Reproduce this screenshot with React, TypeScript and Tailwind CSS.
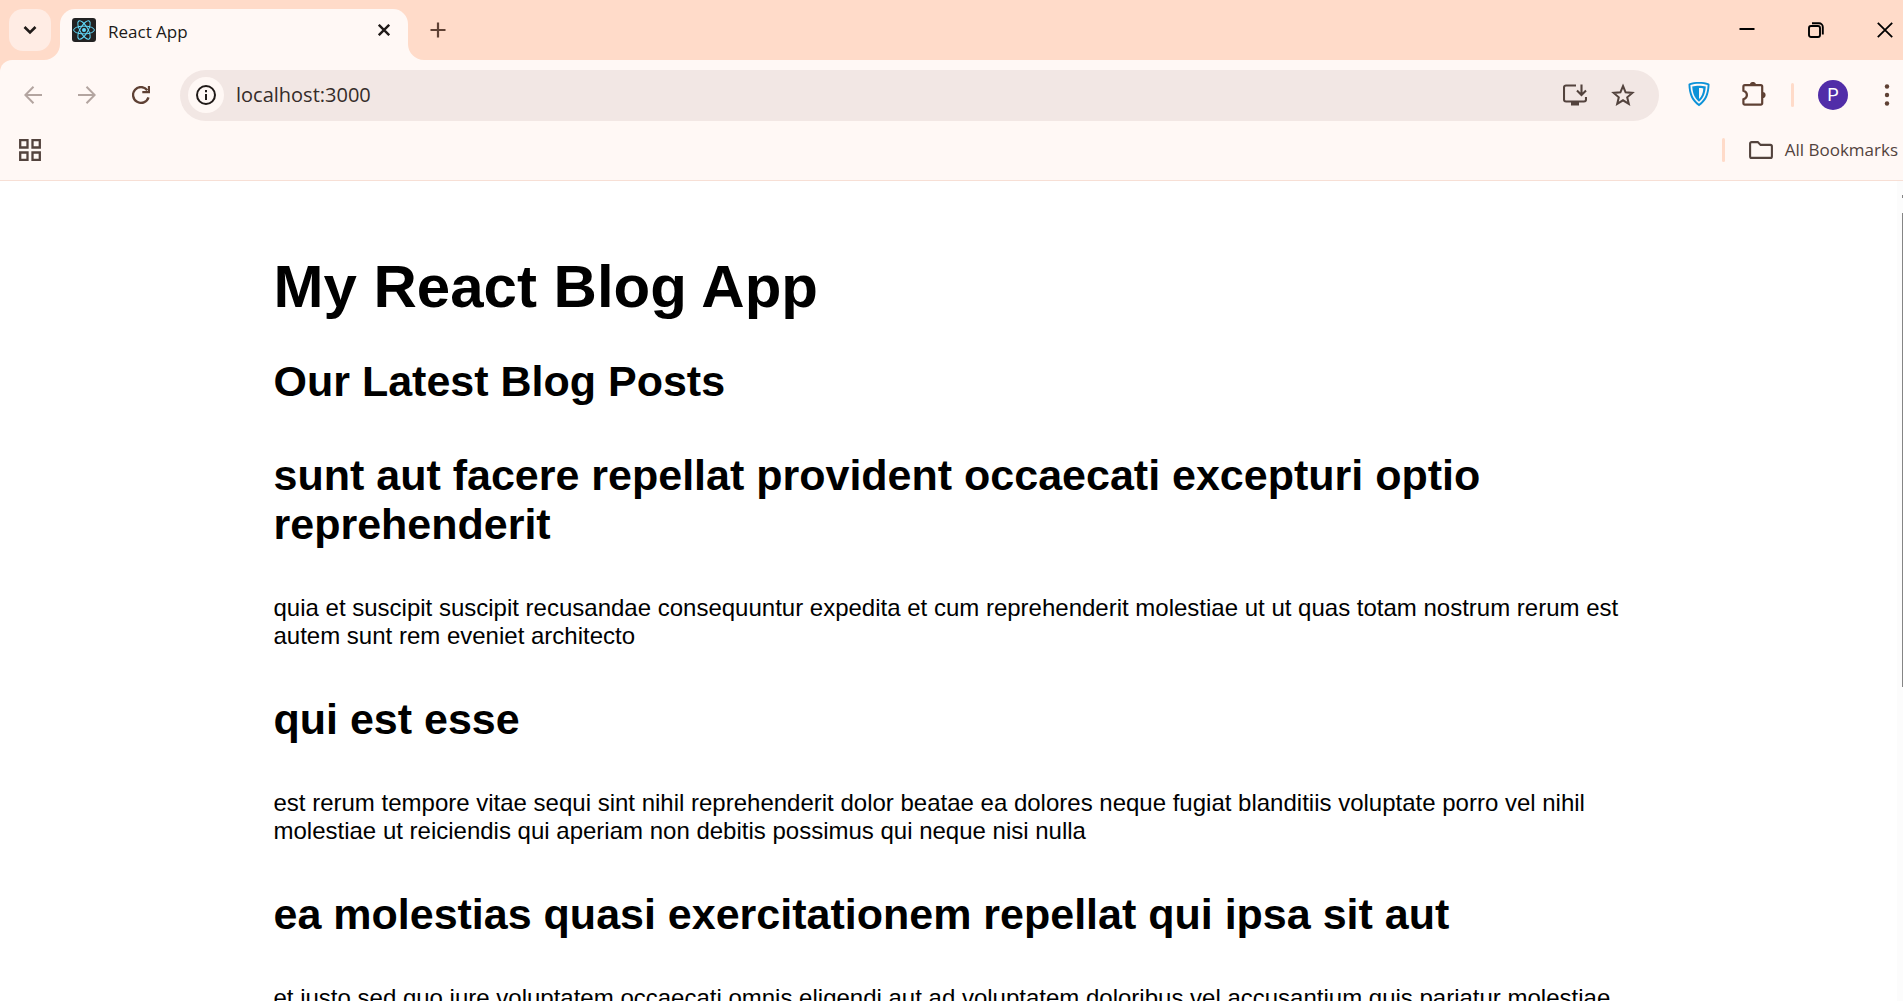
import React from "react";

const posts = [
  {
    title: "sunt aut facere repellat provident occaecati excepturi optio reprehenderit",
    body: "quia et suscipit suscipit recusandae consequuntur expedita et cum reprehenderit molestiae ut ut quas totam nostrum rerum est autem sunt rem eveniet architecto",
  },
  {
    title: "qui est esse",
    body: "est rerum tempore vitae sequi sint nihil reprehenderit dolor beatae ea dolores neque fugiat blanditiis voluptate porro vel nihil molestiae ut reiciendis qui aperiam non debitis possimus qui neque nisi nulla",
  },
  {
    title: "ea molestias quasi exercitationem repellat qui ipsa sit aut",
    body: "et iusto sed quo iure voluptatem occaecati omnis eligendi aut ad voluptatem doloribus vel accusantium quis pariatur molestiae porro eius odio et labore et velit aut",
  },
];

function ReactLogo() {
  return (
    <svg width="24" height="24" viewBox="0 0 24 24" fill="none" stroke="#61dafb" strokeWidth="1" aria-hidden="true">
      <rect width="24" height="24" rx="3" fill="#222222" stroke="none" />
      <ellipse cx="12" cy="12" rx="10.4" ry="3.9" />
      <ellipse cx="12" cy="12" rx="10.4" ry="3.9" transform="rotate(60 12 12)" />
      <ellipse cx="12" cy="12" rx="10.4" ry="3.9" transform="rotate(120 12 12)" />
      <circle cx="12" cy="12" r="2" fill="#61dafb" stroke="none" />
    </svg>
  );
}

function TabStrip() {
  return (
    <div className="flex h-[60px] items-center bg-[#ffdbc9] pl-[9px]">
      <button aria-label="Search tabs" className="grid size-[42px] shrink-0 place-items-center rounded-[14px] bg-[#ffece4]">
        <svg width="14" height="10" viewBox="0 0 14 10" fill="none" stroke="#201a18" strokeWidth="2.6">
          <path d="M1.5 2 7 7.5 12.5 2" />
        </svg>
      </button>
      <div className="relative ml-[9px] flex h-[51px] w-[348px] shrink-0 items-start self-end rounded-t-[15px] bg-[#fff8f5] pt-[9px] pl-3">
        <svg className="absolute bottom-0 -left-4" width="16" height="16" viewBox="0 0 16 16" fill="#fff8f5" aria-hidden="true">
          <path d="M16 0v16H0A16 16 0 0 0 16 0Z" />
        </svg>
        <svg className="absolute -right-4 bottom-0" width="16" height="16" viewBox="0 0 16 16" fill="#fff8f5" aria-hidden="true">
          <path d="M0 0v16h16A16 16 0 0 1 0 0Z" />
        </svg>
        <ReactLogo />
        <span className="ml-3 pt-0.5 text-[17px] leading-6 text-[#201a18]">React App</span>
        <button aria-label="Close tab" className="mr-3 ml-auto grid size-6 place-items-center">
          <svg width="12" height="12" viewBox="0 0 12 12" fill="none" stroke="#201a18" strokeWidth="2.4">
            <path d="m0.8 0.8 10.4 10.4M11.2 0.8 0.8 11.2" />
          </svg>
        </button>
      </div>
      <button aria-label="New tab" className="ml-[18px] grid size-6 place-items-center">
        <svg width="16" height="16" viewBox="0 0 16 16" fill="none" stroke="#5f4134" strokeWidth="2.2">
          <path d="M8 0.5v15M0.5 8h15" />
        </svg>
      </button>
      <div className="mr-[10px] ml-auto flex items-center gap-[53px] text-black">
        <button aria-label="Minimize">
          <svg width="16" height="16" viewBox="0 0 16 16" stroke="currentColor" strokeWidth="2">
            <path d="M0.5 7h15" />
          </svg>
        </button>
        <button aria-label="Restore">
          <svg width="16" height="16" viewBox="0 0 16 16" fill="none" stroke="currentColor" strokeWidth="1.9">
            <rect x="1" y="4" width="11" height="11" rx="2" />
            <path d="M4 1.2h7A3.8 3.8 0 0 1 14.8 5v7.5" />
          </svg>
        </button>
        <button aria-label="Close">
          <svg width="16" height="16" viewBox="0 0 16 16" fill="none" stroke="currentColor" strokeWidth="1.8">
            <path d="m0.8 0.8 14.4 14.4M15.2 0.8 0.8 15.2" />
          </svg>
        </button>
      </div>
    </div>
  );
}

function Toolbar() {
  return (
    <div className="bg-[#ffdbc9]">
      <div className="flex h-[70px] items-center rounded-tl-[12px] bg-[#fff8f5] pl-6">
        <div className="flex items-center gap-9">
          <button aria-label="Back" disabled>
            <svg width="18" height="18" viewBox="0 0 18 18" fill="none" stroke="#b3a5a0" strokeWidth="2">
              <path d="M18 9H1.5M9.5 0.8 1.3 9l8.2 8.2" />
            </svg>
          </button>
          <button aria-label="Forward" disabled>
            <svg width="18" height="18" viewBox="0 0 18 18" fill="none" stroke="#b3a5a0" strokeWidth="2">
              <path d="M0 9h16.5M8.5 0.8 16.7 9l-8.2 8.2" />
            </svg>
          </button>
          <button aria-label="Reload">
            <svg width="18" height="18" viewBox="0 0 18 18" fill="none" stroke="#5f4134" strokeWidth="2.3">
              <path d="M16.5 11.4A7.9 7.9 0 1 1 15.3 4.2" />
              <path d="M17 0v6.2h-6.7" />
            </svg>
          </button>
        </div>
        <div className="ml-[30px] flex h-[51px] min-w-0 grow items-center rounded-full bg-[#f2e7e4] pr-6 pl-2">
          <button aria-label="View site information" className="grid size-9 shrink-0 place-items-center rounded-full bg-[#fff8f5]">
            <svg width="20" height="20" viewBox="0 0 20 20" fill="none" stroke="#201a18" strokeWidth="2">
              <circle cx="10" cy="10" r="9" />
              <path d="M10 9v6M10 5v2.2" />
            </svg>
          </button>
          <input
            aria-label="Address"
            defaultValue="localhost:3000"
            className="ml-3 min-w-0 grow bg-transparent text-xl leading-7 text-[#352c29] outline-none"
          />
          <button aria-label="Install app" className="shrink-0">
            <svg width="24" height="22" viewBox="0 0 24 22" fill="none" stroke="#53433d" strokeWidth="2.1">
              <path d="M13 1.5H3A2 2 0 0 0 1 3.5V15.5a2 2 0 0 0 2 2H21a2 2 0 0 0 2-2V13" />
              <path d="M18.500 0.500v10M14 6.500l4.500 4.500L23 6.500" />
              <path d="M8 17.500h8V21.500H8Z" fill="#53433d" stroke="none" />
            </svg>
          </button>
          <button aria-label="Bookmark this tab" className="ml-6 shrink-0">
            <svg width="24" height="24" viewBox="0 0 24 24" fill="none" stroke="#53433d" strokeWidth="2">
              <path d="m12 3 2.600 6.300 6.800.6-5.200 4.400 1.600 6.600L12 17.300l-5.800 3.600 1.600-6.600L2.600 9.900l6.800-.6Z" />
            </svg>
          </button>
        </div>
        <div className="ml-7 flex shrink-0 items-center">
          <button aria-label="Security extension">
            <svg width="24" height="26" viewBox="0 0 24 26" aria-hidden="true">
              <path d="M12 0c3.500 0 7 .4 9.800 1.600.6.3.7.6.7 1.200C22.300 12 19.500 19.500 12 24.200 4.500 19.500 1.700 12 1.500 2.800c0-.6.1-.9.7-1.200C5 .4 8.500 0 12 0Z" fill="#0c92d8" />
              <path d="M12 1.800c3 0 6 .3 8.600 1.300C20.300 11 18 17.600 12 21.800 6 17.600 3.700 11 3.400 3.100 6 2.100 9 1.800 12 1.800Z" fill="#fff8f5" />
              <path d="M12 3.700c2.500 0 4.800.2 6.800.9C18.400 11 16.500 16.200 12 19.800 7.500 16.200 5.600 11 5.200 4.600 7.200 3.900 9.500 3.700 12 3.700Z" fill="#0c92d8" />
              <path d="M12 6c1.500 0 3 .1 4.300.5C16 11 14.700 14.500 12 17Z" fill="#fff8f5" />
            </svg>
          </button>
          <button aria-label="Extensions" className="ml-[30px]">
            <svg width="26" height="26" viewBox="0 0 26 26" fill="none" stroke="#5f4134" strokeWidth="2.2">
              <path d="M3.800 3.100H19.800a1.400 1.400 0 0 1 1.400 1.400V21.200a1.400 1.400 0 0 1-1.400 1.400H3.800A1.400 1.400 0 0 1 2.400 21.200V17.200c4.700-1.500 4.700-6.900 0-8.400V4.500a1.400 1.400 0 0 1 1.400-1.400Z" />
              <path d="M8.800 3a3.100 3.100 0 0 1 6.200 0ZM21.500 9.900a3.100 3.100 0 0 1 0 6.200Z" fill="#5f4134" stroke="none" />
            </svg>
          </button>
          <span className="ml-6 h-6 w-[3px] rounded-full bg-[#ffdbc9]" />
          <button aria-label="Profile" className="ml-6 grid size-[30px] place-items-center rounded-full bg-[#512da8] font-[Roboto,sans-serif] text-lg leading-none text-white">
            P
          </button>
          <button aria-label="Menu" className="mr-3 ml-[35px]">
            <svg width="8" height="22" viewBox="0 0 8 22" fill="#5f4134">
              <circle cx="4" cy="2.500" r="2.200" />
              <circle cx="4" cy="11" r="2.200" />
              <circle cx="4" cy="19.500" r="2.200" />
            </svg>
          </button>
        </div>
      </div>
    </div>
  );
}

function BookmarksBar() {
  return (
    <div className="flex h-[51px] items-start justify-between border-b border-[#f7dfd5] bg-[#fff8f5] pt-2 pr-[5px] pl-[19px]">
      <button aria-label="Apps" className="grid h-6 place-items-center">
        <svg width="22" height="22" viewBox="0 0 22 22" fill="none" stroke="#53433d" strokeWidth="2.3">
          <path d="M1.200 1.200h7.300v7.300H1.200ZM13.500 1.200h7.300v7.300h-7.300ZM1.200 13.500h7.300v7.300H1.200ZM13.500 13.500h7.300v7.300h-7.300Z" />
        </svg>
      </button>
      <div className="flex items-center">
        <span className="h-6 w-[3px] rounded-full bg-[#ffdbc9]" />
        <button className="ml-6 flex items-center gap-3 text-[17px] leading-6 text-[#53433d]">
          <svg width="24" height="18" viewBox="0 0 24 18" fill="none" stroke="#53433d" strokeWidth="2.1" aria-hidden="true">
            <path d="M1.100 2.600A1.500 1.500 0 0 1 2.600 1.100H8.800L11.600 3.900H21.400a1.500 1.500 0 0 1 1.500 1.500V15.400a1.500 1.500 0 0 1-1.500 1.500H2.600a1.500 1.500 0 0 1-1.500-1.500Z" />
          </svg>
          All Bookmarks
        </button>
      </div>
    </div>
  );
}

export default function App() {
  return (
    <div className="flex h-screen flex-col overflow-hidden bg-white">
      <header className="shrink-0 font-['Open_Sans',sans-serif]">
        <TabStrip />
        <Toolbar />
        <BookmarksBar />
      </header>
      <div className="flex min-h-0 grow">
        <main className="min-w-0 grow overflow-hidden font-['Liberation_Sans',Arial,sans-serif] text-black">
          <div className="mx-auto max-w-[1350px] pt-[72px]">
            <h1 className="text-[60px] leading-[68px] font-bold">My React Blog App</h1>
            <h2 className="mt-9 text-[43px] leading-[49px] font-bold">Our Latest Blog Posts</h2>
            {posts.map((post) => (
              <article key={post.title} className="mt-[45px]">
                <h2 className="text-[43px] leading-[49px] font-bold">{post.title}</h2>
                <p className="mt-[45px] text-2xl leading-7">{post.body}</p>
              </article>
            ))}
          </div>
        </main>
        <div className="flex w-[6px] shrink-0 flex-col items-end bg-[#fcfcfc]" aria-hidden="true">
          <span className="mt-[14px] h-[3px] w-px bg-[#858585]" />
          <span className="mt-[15px] h-[474px] w-px bg-[#858585]" />
        </div>
      </div>
    </div>
  );
}
